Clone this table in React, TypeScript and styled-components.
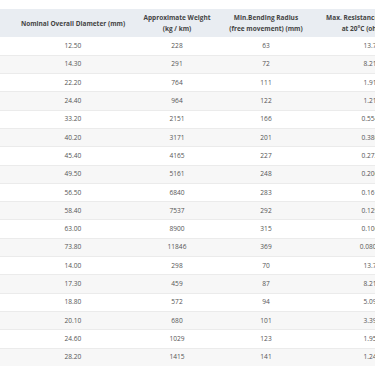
import { useEffect, useRef, FC } from "react";
import styled, { createGlobalStyle } from "styled-components";

const GlobalStyle = createGlobalStyle`
  html, body {
    margin: 0;
    padding: 0;
    background: #fff;
    font-family: "Open Sans", "DejaVu Sans", sans-serif;
  }
`;

const Page = styled.div`
  width: 375px;
  height: 366px;
  padding-top: 9px;
  box-sizing: border-box;
  overflow: hidden;
`;

const ScrollWrap = styled.div`
  width: 100%;
  overflow-x: auto;
  scrollbar-width: none;
  &::-webkit-scrollbar {
    display: none;
  }
`;

const Table = styled.table`
  border-collapse: collapse;
  table-layout: fixed;
  width: 526px;
  font-size: 6.6px;
  color: #555;
`;

const HeadRow = styled.tr`
  height: 28px;
  background: #e9edf2;
`;

const Th = styled.th<{ $w: number; $link?: boolean }>`
  box-sizing: border-box;
  width: ${(p) => p.$w}px;
  padding: 0 6px;
  font-weight: 700;
  font-size: 6.5px;
  line-height: 11px;
  color: ${(p) => (p.$link ? "#2f7fc1" : "#444")};
  text-align: center;
  vertical-align: middle;
  white-space: nowrap;
  overflow: hidden;
`;

const Row = styled.tr`
  height: 18.3px;
  border-bottom: 1px solid #ebebeb;
  &:nth-child(even) {
    background: #f7f7f7;
  }
`;

const Td = styled.td`
  box-sizing: border-box;
  padding: 0 6px;
  text-align: center;
  vertical-align: middle;
  white-space: nowrap;
  line-height: 10px;
`;

type Cable = {
  section: string;
  diameter: string;
  weight: number;
  radius: number;
  resistance: string;
};

const cables: Cable[] = [
  { section: "1.5", diameter: "12.50", weight: 228, radius: 63, resistance: "13.7" },
  { section: "2.5", diameter: "14.30", weight: 291, radius: 72, resistance: "8.21" },
  { section: "10", diameter: "22.20", weight: 764, radius: 111, resistance: "1.91" },
  { section: "16", diameter: "24.40", weight: 964, radius: 122, resistance: "1.21" },
  { section: "35", diameter: "33.20", weight: 2151, radius: 166, resistance: "0.554" },
  { section: "50", diameter: "40.20", weight: 3171, radius: 201, resistance: "0.386" },
  { section: "70", diameter: "45.40", weight: 4165, radius: 227, resistance: "0.272" },
  { section: "95", diameter: "49.50", weight: 5161, radius: 248, resistance: "0.206" },
  { section: "120", diameter: "56.50", weight: 6840, radius: 283, resistance: "0.161" },
  { section: "150", diameter: "58.40", weight: 7537, radius: 292, resistance: "0.129" },
  { section: "185", diameter: "63.00", weight: 8900, radius: 315, resistance: "0.106" },
  { section: "240", diameter: "73.80", weight: 11846, radius: 369, resistance: "0.0801" },
  { section: "1.5", diameter: "14.00", weight: 298, radius: 70, resistance: "13.7" },
  { section: "2.5", diameter: "17.30", weight: 459, radius: 87, resistance: "8.21" },
  { section: "4", diameter: "18.80", weight: 572, radius: 94, resistance: "5.09" },
  { section: "6", diameter: "20.10", weight: 680, radius: 101, resistance: "3.39" },
  { section: "10", diameter: "24.60", weight: 1029, radius: 123, resistance: "1.95" },
  { section: "16", diameter: "28.20", weight: 1415, radius: 141, resistance: "1.24" },
];

const App: FC = () => {
  const wrapRef = useRef<HTMLDivElement>(null);

  // the table is wider than the viewport, it sits scrolled to the right
  useEffect(() => {
    if (wrapRef.current) wrapRef.current.scrollLeft = 100;
  }, []);

  return (
    <Page>
      <GlobalStyle />
      <ScrollWrap ref={wrapRef}>
        <Table>
          <thead>
            <HeadRow>
              <Th $w={110} $link>
                Cross Section (mm²)
              </Th>
              <Th $w={126}>Nominal Overall Diameter (mm)</Th>
              <Th $w={82}>
                Approximate Weight
                <br />
                (kg / km)
              </Th>
              <Th $w={96}>
                Min.Bending Radius
                <br />
                (free movement) (mm)
              </Th>
              <Th $w={112}>
                Max. Resistance Conductor
                <br />
                at 20°C (ohm/km)
              </Th>
            </HeadRow>
          </thead>
          <tbody>
            {cables.map((c, i) => (
              <Row key={i}>
                <Td>{c.section}</Td>
                <Td>{c.diameter}</Td>
                <Td>{c.weight}</Td>
                <Td>{c.radius}</Td>
                <Td>{c.resistance}</Td>
              </Row>
            ))}
          </tbody>
        </Table>
      </ScrollWrap>
    </Page>
  );
};

export default App;
